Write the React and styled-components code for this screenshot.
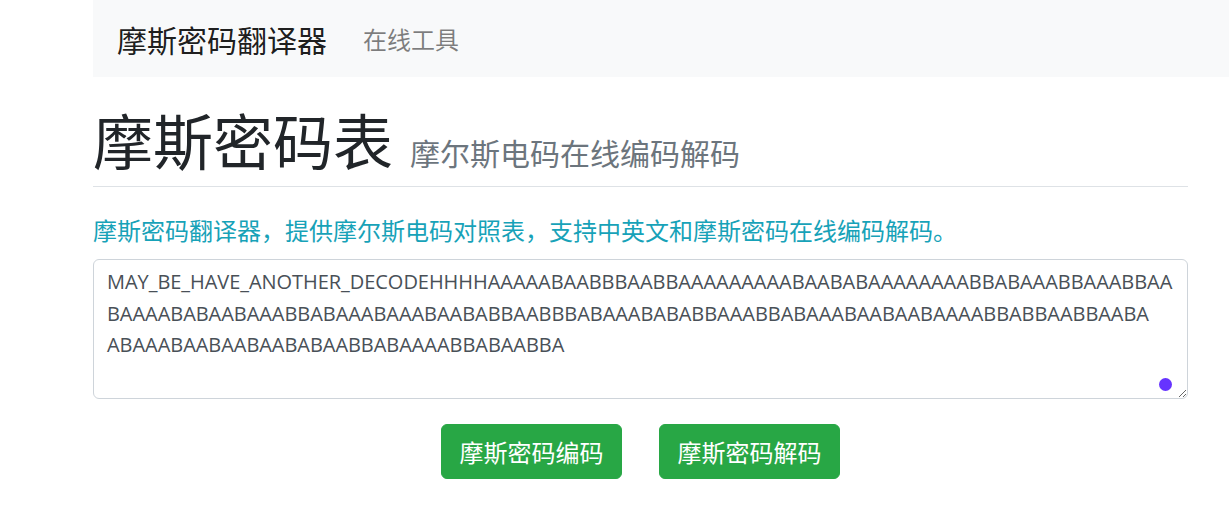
import React, { useState } from 'react';
import styled, { createGlobalStyle } from 'styled-components';

const CJK = `"Noto Sans CJK SC", "Noto Sans", sans-serif`;

const GlobalStyle = createGlobalStyle`
  html, body {
    margin: 0;
    padding: 0;
    background: #fff;
    overflow: hidden;
  }
  body {
    font-family: ${CJK};
    color: #212529;
  }
  * {
    box-sizing: border-box;
  }
`;

const Page = styled.div`
  padding-left: 93px;
`;

const Navbar = styled.nav`
  display: flex;
  align-items: center;
  height: 77px;
  padding: 0 24px;
  background-color: #f8f9fa;
  margin-right: -20px;
`;

const Brand = styled.a`
  font-size: 30px;
  line-height: 1;
  color: rgba(0, 0, 0, 0.9);
  margin-right: 36px;
  text-decoration: none;
`;

const NavLink = styled.a`
  font-size: 24px;
  line-height: 1;
  color: rgba(0, 0, 0, 0.5);
  text-decoration: none;
`;

const Container = styled.main`
  width: 1095px;
`;

const Header = styled.div`
  display: flex;
  align-items: baseline;
  gap: 17px;
  padding-top: 26px;
  padding-bottom: 11px;
  border-bottom: 1px solid #dee2e6;
`;

const Title = styled.h1`
  margin: 0;
  font-size: 60px;
  line-height: 72px;
  font-weight: 400;
  color: #212529;
`;

const Subtitle = styled.small`
  font-size: 30px;
  color: #6c757d;
`;

const Lead = styled.p`
  margin: 25px 0 11px;
  font-size: 24px;
  line-height: 36px;
  color: #17a2b8;
`;

const Field = styled.div`
  position: relative;
`;

const TextArea = styled.textarea`
  display: block;
  width: 100%;
  height: 140px;
  padding: 6px 13px;
  border: 1px solid #ced4da;
  border-radius: 6px;
  font-family: "Open Sans", "Noto Sans", sans-serif;
  font-size: 20px;
  letter-spacing: -0.05px;
  line-height: 31.5px;
  color: #495057;
  white-space: pre;
  overflow: hidden;
  resize: vertical;
  outline: none;
`;

const Dot = styled.span`
  position: absolute;
  right: 16px;
  bottom: 8px;
  width: 13px;
  height: 13px;
  border-radius: 50%;
  background: #6633ff;
`;

const Actions = styled.div`
  display: flex;
  justify-content: center;
  gap: 37px;
  margin-top: 25px;
`;

const Button = styled.button`
  font-family: ${CJK};
  font-size: 24px;
  line-height: 36px;
  padding: 8.5px 17.5px;
  border: 1px solid #28a745;
  border-radius: 6px;
  background-color: #28a745;
  color: #fff;
  cursor: pointer;
`;

const Section = styled.h3`
  margin: 23px 0 0;
  font-size: 42px;
  line-height: 50px;
  font-weight: 400;
`;

const initial = [
  'MAY_BE_HAVE_ANOTHER_DECODEHHHHAAAAABAABBBAABBAAAAAAAAABAABABAAAAAAAABBABAAABBAAABBAA',
  'BAAAABABAABAAABBABAAABAAABAABABBAABBBABAAABABABBAAABBABAAABAABAABAAAABBABBAABBAABA',
  'ABAAABAABAABAABABAABBABAAAABBABAABBA',
].join('\n');

export default function App() {
  const [text, setText] = useState(initial);

  return (
    <>
      <GlobalStyle />
      <Page>
        <Navbar>
          <Brand href="#">摩斯密码翻译器</Brand>
          <NavLink href="#">在线工具</NavLink>
        </Navbar>
        <Container>
          <Header>
            <Title>摩斯密码表</Title>
            <Subtitle>摩尔斯电码在线编码解码</Subtitle>
          </Header>
          <Lead>摩斯密码翻译器，提供摩尔斯电码对照表，支持中英文和摩斯密码在线编码解码。</Lead>
          <Field>
            <TextArea value={text} onChange={(e) => setText(e.target.value)} />
            <Dot />
          </Field>
          <Actions>
            <Button>摩斯密码编码</Button>
            <Button>摩斯密码解码</Button>
          </Actions>
          <Section>摩斯密码对照表</Section>
        </Container>
      </Page>
    </>
  );
}
